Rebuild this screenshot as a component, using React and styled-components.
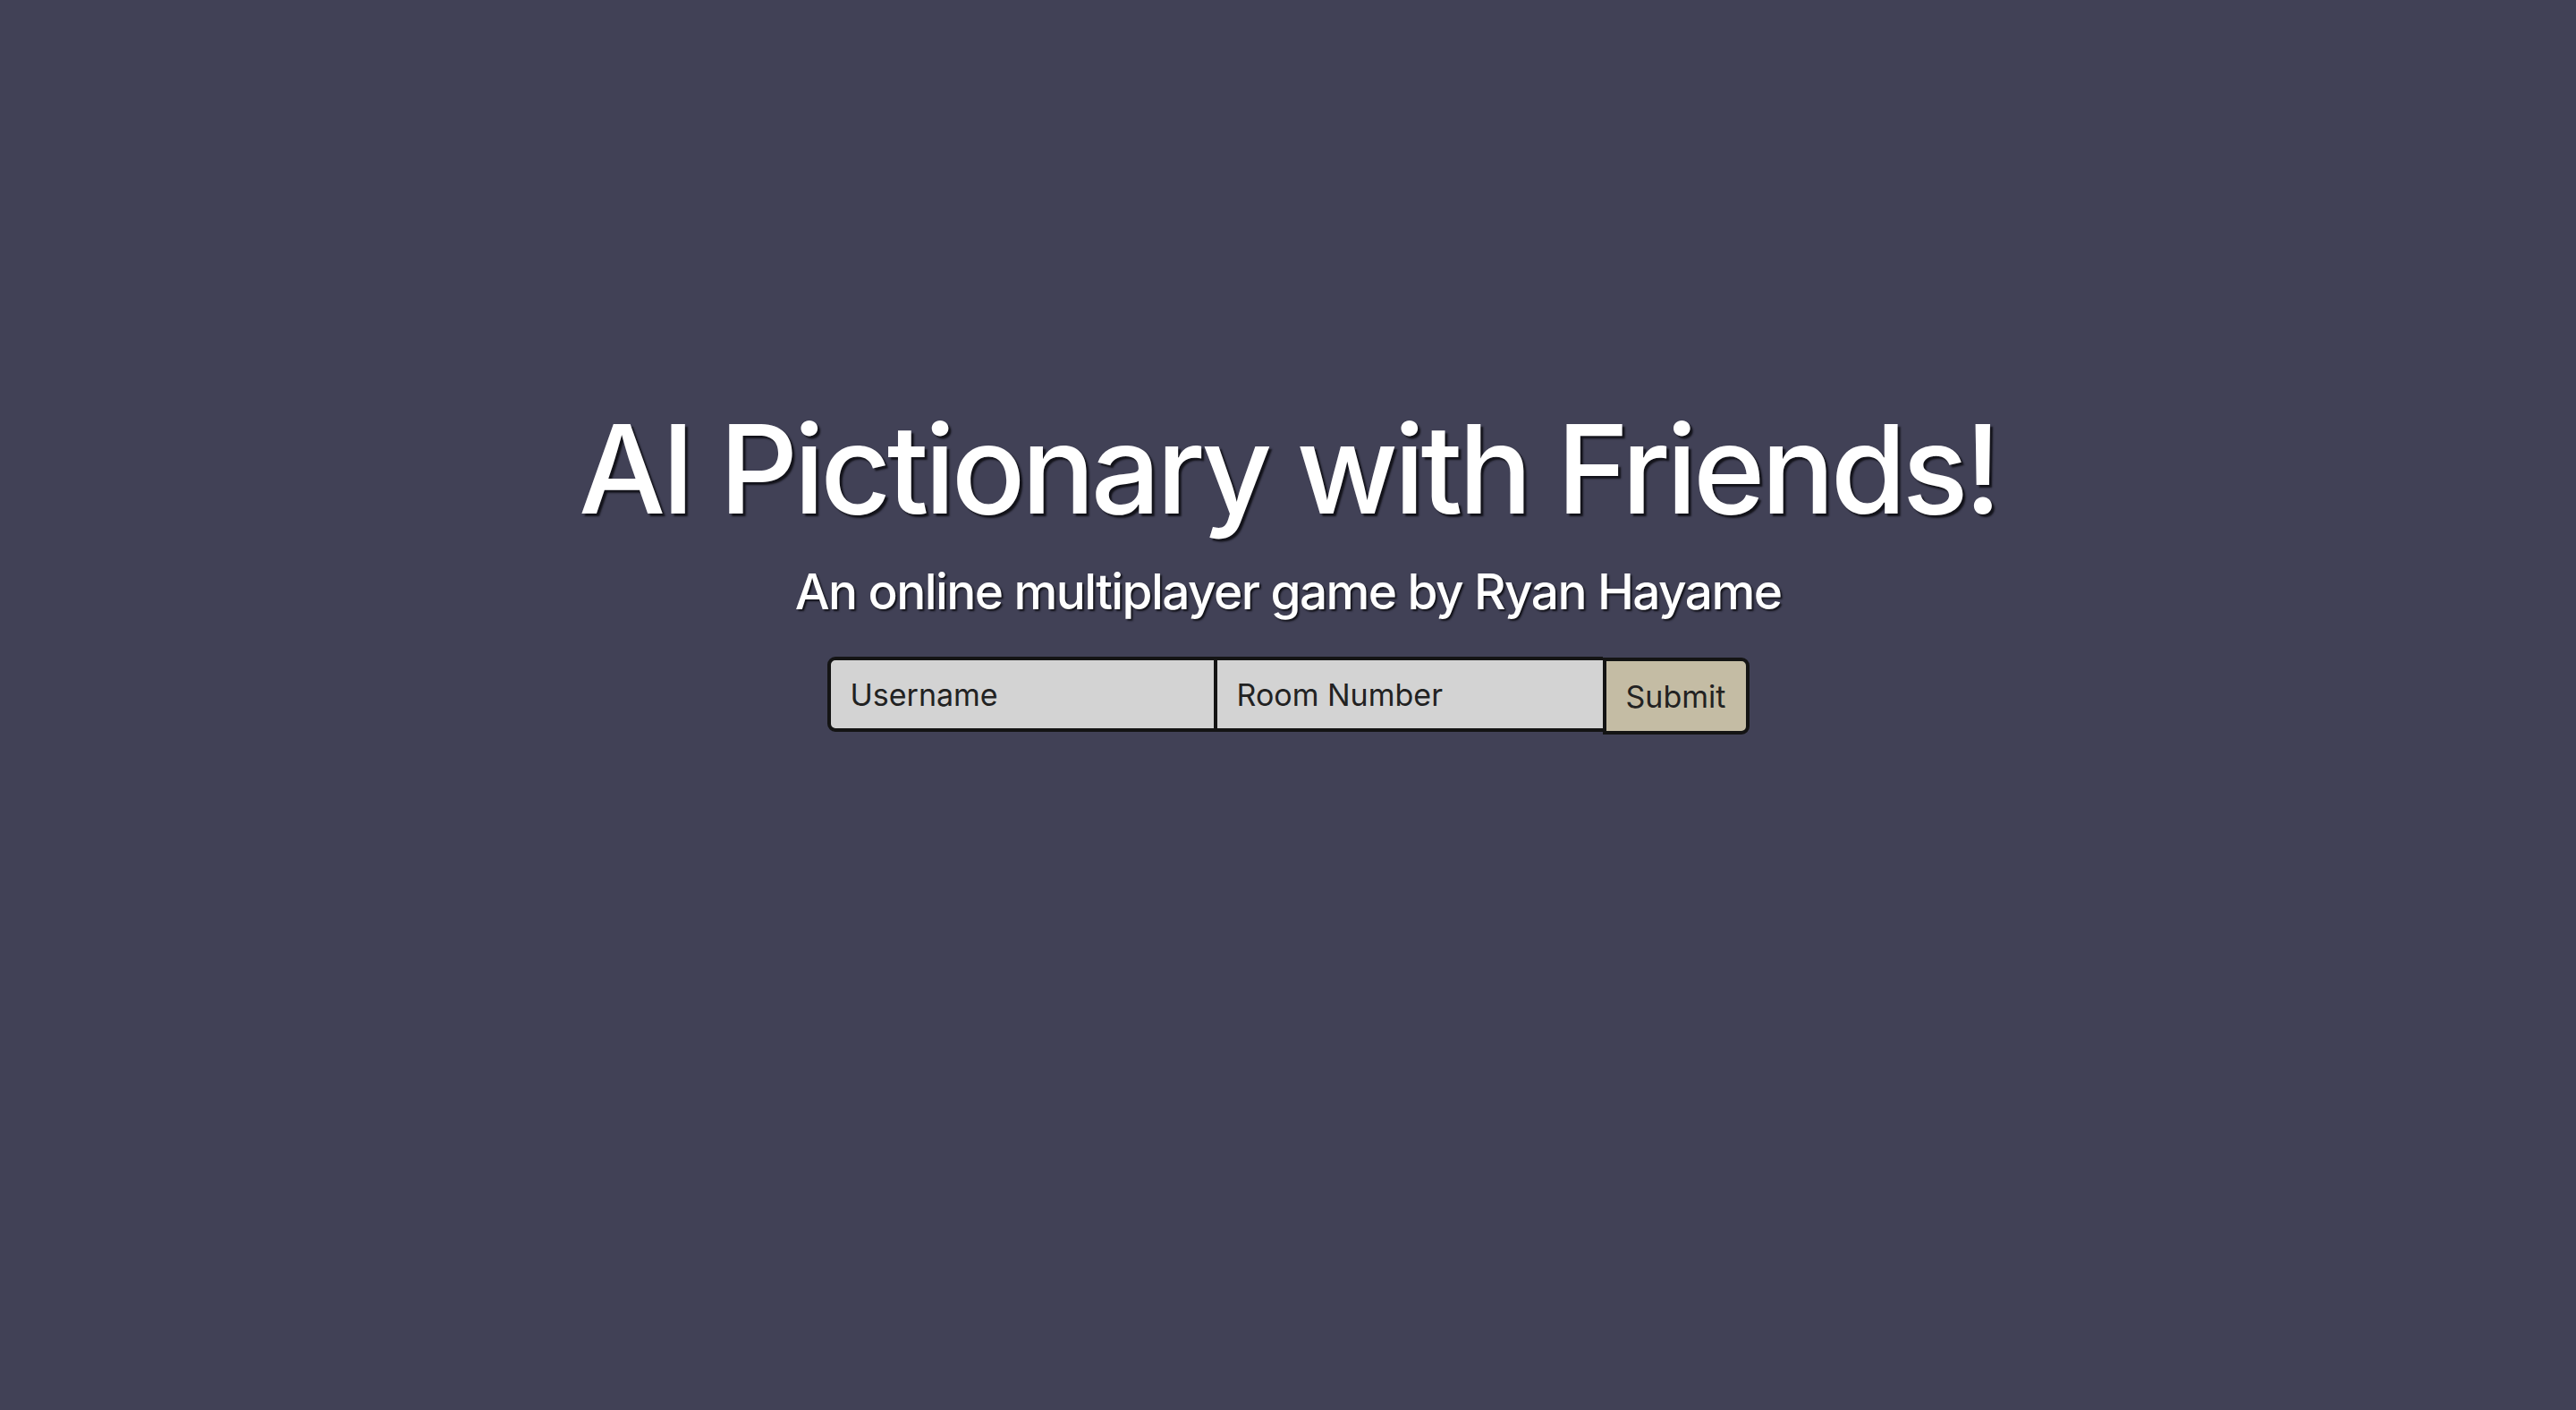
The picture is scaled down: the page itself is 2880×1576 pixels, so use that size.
import React from 'react'
import styled, { createGlobalStyle } from 'styled-components'

const GlobalStyle = createGlobalStyle`
  html, body {
    margin: 0;
    padding: 0;
    background: #414156;
  }
  body {
    font-family: Inter, 'Noto Sans', 'Liberation Sans', sans-serif;
  }
`

const Page = styled.main`
  min-height: 1576px;
  display: flex;
  flex-direction: column;
  align-items: center;
  padding-top: 456px;
  box-sizing: border-box;
  color: #fff;
`

const Title = styled.h1`
  margin: 0;
  font-size: 137px;
  line-height: 1;
  font-weight: 500;
  letter-spacing: -4.6px;
  text-shadow: 3px 3px 2px rgba(10, 10, 15, 0.85);
`

const Subtitle = styled.h2`
  margin: 41px 0 0;
  font-size: 55px;
  line-height: 1;
  font-weight: 500;
  letter-spacing: -1.6px;
  text-shadow: 2px 2px 2px rgba(10, 10, 15, 0.85);
`

const Form = styled.form`
  display: flex;
  align-items: stretch;
  margin-top: 45px;
`

const Field = styled.input`
  box-sizing: border-box;
  width: ${(p) => p.$width}px;
  height: 84px;
  padding: 0 22px;
  border: 4px solid #141414;
  border-left-width: ${(p) => (p.$first ? 4 : 0)}px;
  border-right-width: ${(p) => (p.$first ? 4 : 0)}px;
  border-radius: ${(p) => (p.$first ? '9px 0 0 9px' : '0')};
  background: #d3d3d3;
  color: #222;
  font-family: inherit;
  font-size: 34px;
  outline: none;

  &::placeholder {
    color: #222;
    opacity: 1;
  }
`

const SubmitButton = styled.button`
  box-sizing: border-box;
  width: 164px;
  height: 86px;
  margin-top: 1px;
  padding: 0 22px;
  border: 4px solid #141414;
  border-radius: 0 9px 9px 0;
  background: #c4bca4;
  color: #222;
  font-family: inherit;
  font-size: 34px;
  cursor: pointer;
`

export default function App() {
  return (
    <>
      <GlobalStyle />
      <Page>
        <Title>AI Pictionary with Friends!</Title>
        <Subtitle>An online multiplayer game by Ryan Hayame</Subtitle>
        <Form onSubmit={(e) => e.preventDefault()}>
          <Field $first $width={436} placeholder="Username" />
          <Field $width={431} placeholder="Room Number" />
          <SubmitButton type="submit">Submit</SubmitButton>
        </Form>
      </Page>
    </>
  )
}
